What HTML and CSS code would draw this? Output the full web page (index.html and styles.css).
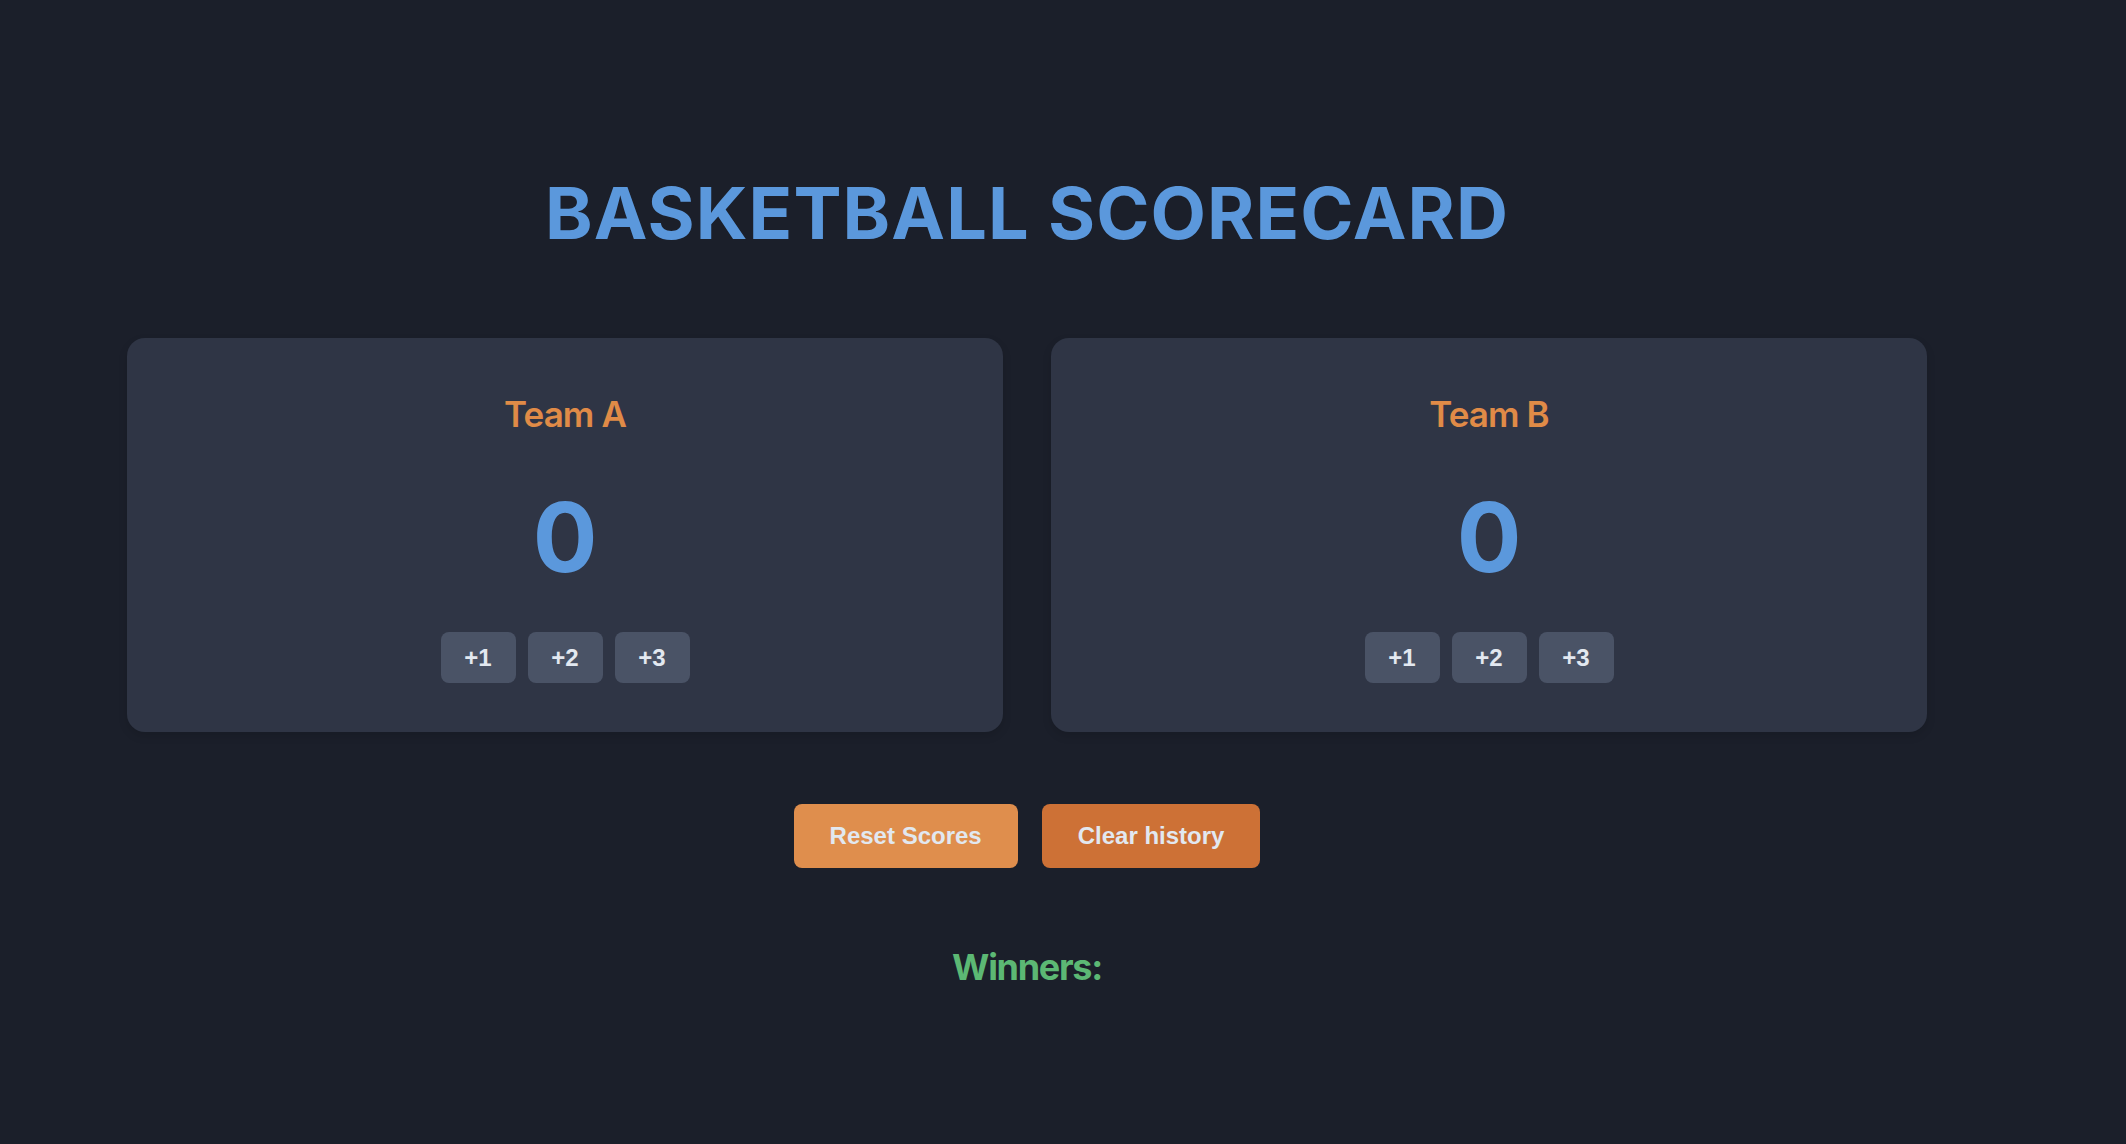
FILE: index.html
```html
<!DOCTYPE html>
<html lang="en">
<head>
<meta charset="utf-8">
<title>Basketball Scorecard</title>
<link rel="stylesheet" href="styles.css">
</head>
<body>
<main class="page">
  <h1 class="title">BASKETBALL SCORECARD</h1>
  <section class="teams">
    <div class="card">
      <h2 class="team-name">Team A</h2>
      <div class="score">0</div>
      <div class="points">
        <button class="pt">+1</button>
        <button class="pt">+2</button>
        <button class="pt">+3</button>
      </div>
    </div>
    <div class="card">
      <h2 class="team-name">Team B</h2>
      <div class="score">0</div>
      <div class="points">
        <button class="pt">+1</button>
        <button class="pt">+2</button>
        <button class="pt">+3</button>
      </div>
    </div>
  </section>
  <div class="actions">
    <button class="action reset">Reset Scores</button>
    <button class="action clear">Clear history</button>
  </div>
  <h2 class="winners">Winners:</h2>
</main>
</body>
</html>
```
FILE: styles.css
```css
html, body {
  margin: 0;
  padding: 0;
  background: #1b1f2a;
  height: 100%;
}
body {
  padding-right: 72px;
  font-family: Inter, "Noto Sans", sans-serif;
  color: #e2e8f0;
}
.page {
  max-width: 1800px;
  margin: 0 auto;
  padding-top: 169px;
  display: flex;
  flex-direction: column;
  align-items: center;
}
.title {
  margin: 0;
  font-size: 72px;
  font-weight: 700;
  line-height: 87px;
  letter-spacing: 1.1px;
  color: #5b98dc;
}
.teams {
  margin-top: 82px;
  width: 100%;
  display: grid;
  grid-template-columns: 1fr 1fr;
  gap: 48px;
}
.card {
  background: #2f3545;
  border-radius: 18px;
  padding: 54px 24px 49px;
  display: flex;
  flex-direction: column;
  align-items: center;
  box-shadow: 0 4px 10px rgba(0,0,0,0.12);
}
.team-name {
  margin: 0;
  font-size: 35px;
  font-weight: 600;
  line-height: 44px;
  letter-spacing: -0.9px;
  color: #e08b47;
}
.score {
  margin-top: 43px;
  font-size: 96px;
  font-weight: 700;
  line-height: 116px;
  color: #5b98dc;
}
.points {
  margin-top: 37px;
  display: flex;
  gap: 12px;
}
.pt {
  font-family: "Liberation Sans", Arial, sans-serif;
  font-weight: 700;
  font-size: 24px;
  line-height: 27px;
  padding: 12px 0;
  width: 75px;
  border: none;
  border-radius: 8px;
  background: #4a5366;
  color: #e2e8f0;
  cursor: pointer;
}
.actions {
  margin-top: 72px;
  display: flex;
  gap: 24px;
}
.action {
  font-family: "Liberation Sans", Arial, sans-serif;
  font-weight: 700;
  font-size: 24px;
  line-height: 28px;
  padding: 18px 36px;
  border: none;
  border-radius: 8px;
  color: #e2e8f0;
  cursor: pointer;
}
.reset {
  background: #df8e4d;
}
.clear {
  background: #cd7136;
}
.winners {
  margin: 77px 0 0;
  font-size: 36px;
  font-weight: 700;
  line-height: 44px;
  letter-spacing: -1.3px;
  color: #5cb874;
}
```
